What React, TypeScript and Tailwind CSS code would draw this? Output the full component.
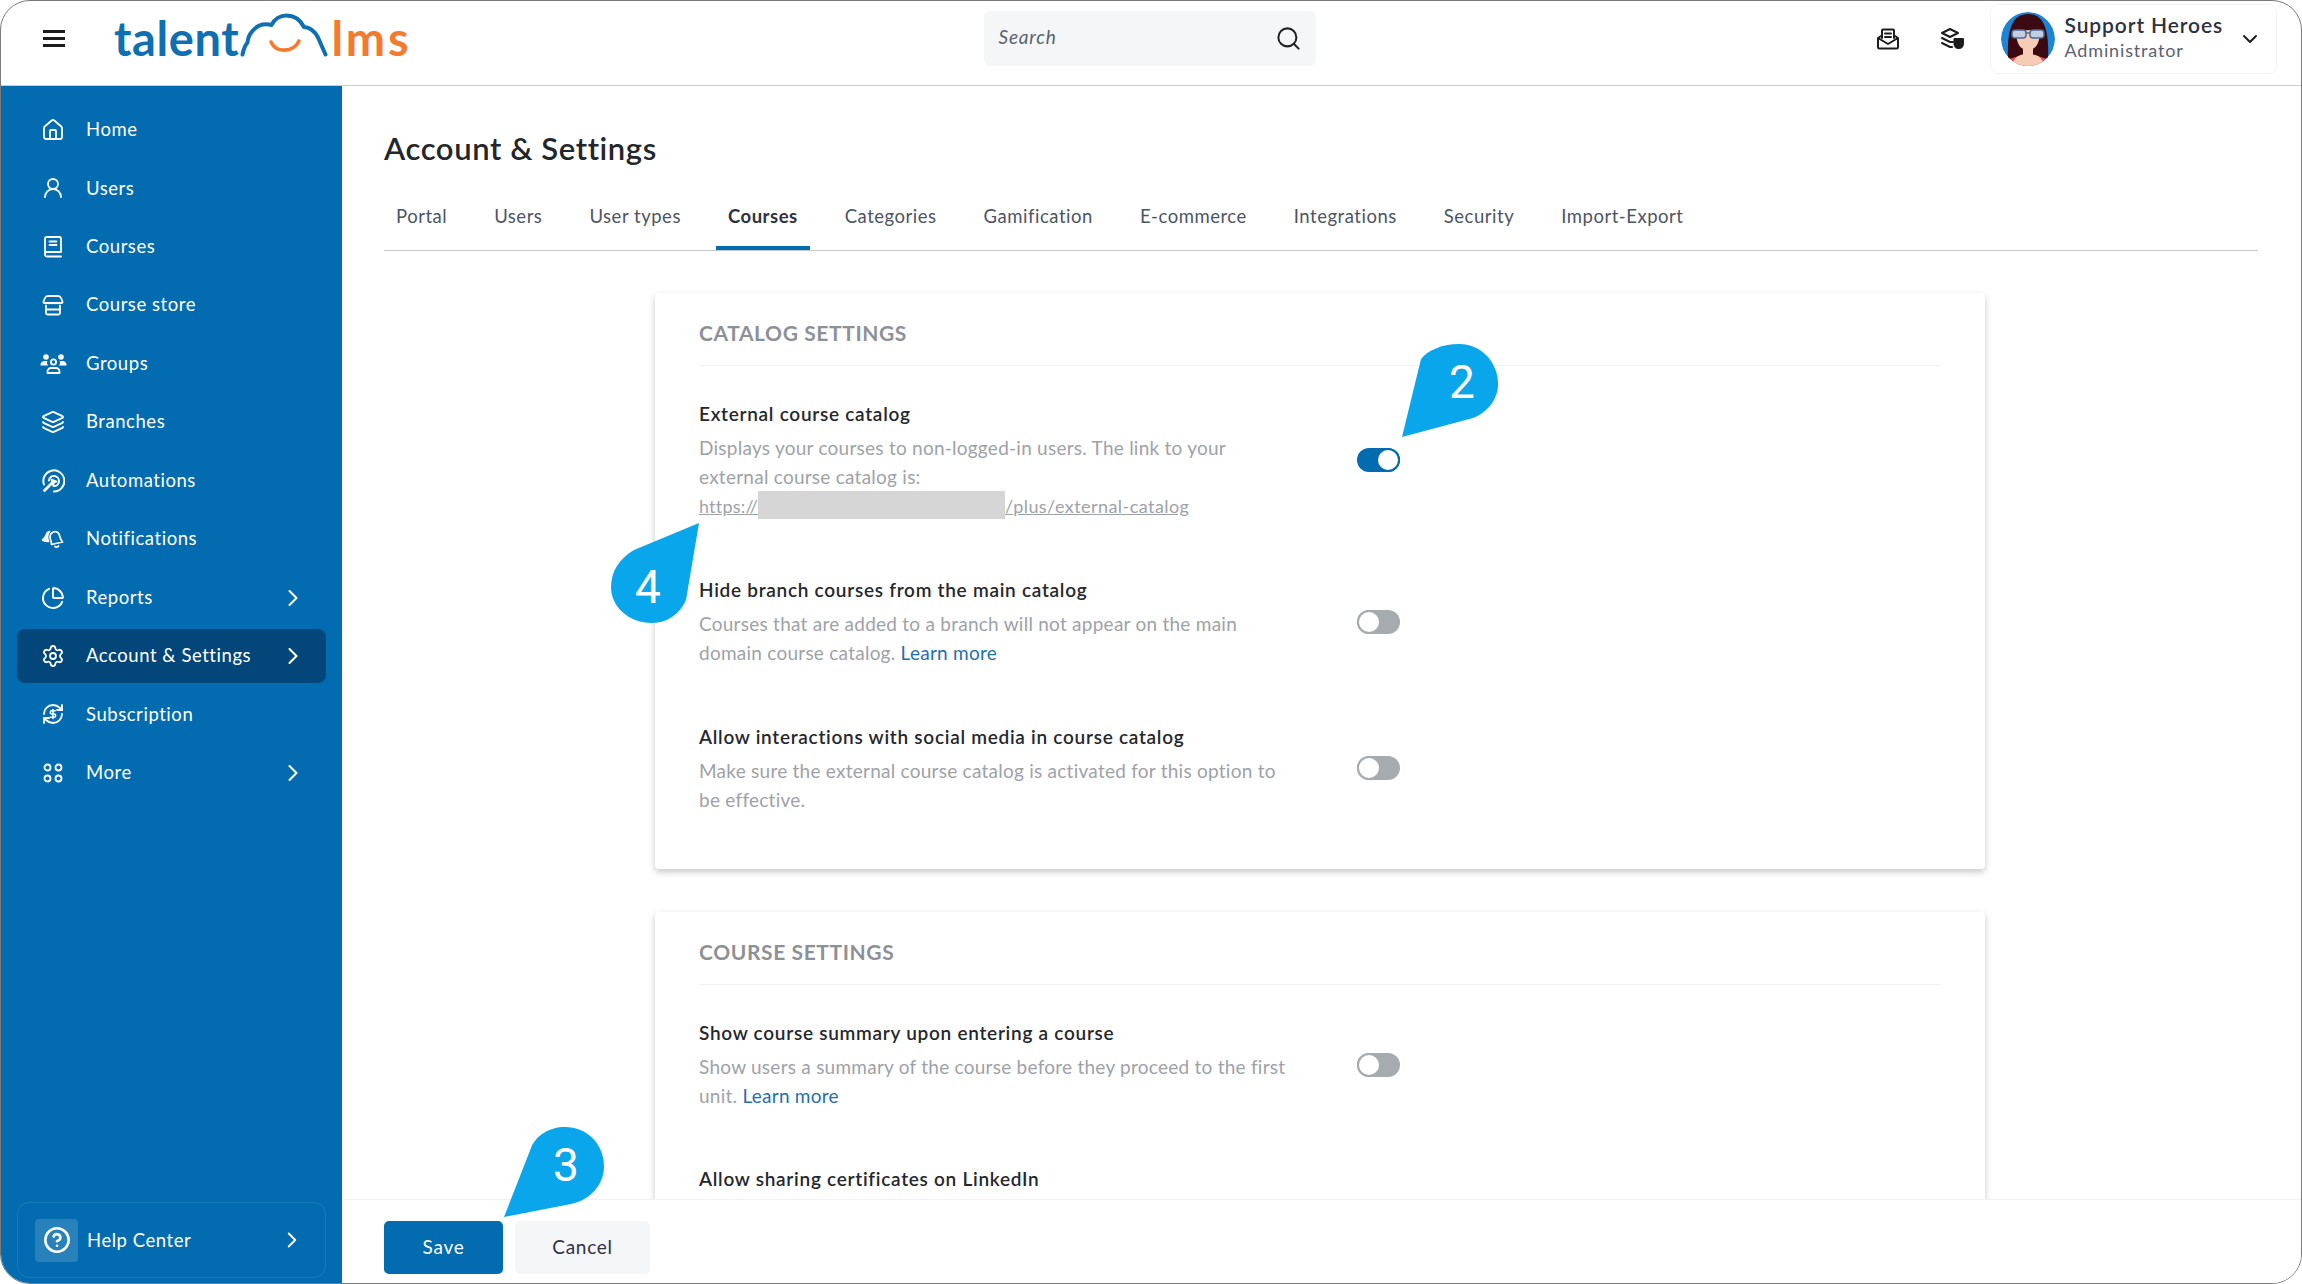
import { ChevronDown, ChevronRight, CircleHelp, House, Layers, Search, Settings, UserRound, ChartPie } from 'lucide-react';
import type { ReactNode } from 'react';

const Icon = ({ children, size = 24 }: { children: ReactNode; size?: number }) => (
  <svg width={size} height={size} viewBox="0 0 24 24" fill="none" stroke="currentColor" strokeWidth={1.8} strokeLinecap="round" strokeLinejoin="round">
    {children}
  </svg>
);

const BookIcon = () => (
  <Icon>
    <path d="M4 18.500V3.500A1.500 1.500 0 0 1 5.500 2h13A1.500 1.500 0 0 1 20 3.500V17H6a2 2 0 0 0-2 2 2 2 0 0 0 2 2.500h14" />
    <path d="M8.500 6.500h7M8.500 10h7" />
  </Icon>
);

const StoreIcon = () => (
  <Icon>
    <path d="M7 3h10c1.500 0 2.500.8 3 2l1.500 3.500c.3 1-.3 1.500-1 1.500h-17c-.7 0-1.300-.5-1-1.500L4 5c.5-1.200 1.500-2 3-2z" />
    <path d="M6.500 9.500q1.500 2 3 0q1.500 2 3 0q1.500 2 3 0q1.500 2 3 0" strokeWidth={1.300} />
    <path d="M5 12.500V20a1.500 1.500 0 0 0 1.500 1.500h11A1.500 1.500 0 0 0 19 20v-7.500" />
    <path d="M5 16.500h14" />
  </Icon>
);

const GroupsIcon = () => (
  <svg width={27} height={24} viewBox="0 0 27 24" fill="none" stroke="currentColor" strokeWidth={1.8} strokeLinecap="round" strokeLinejoin="round">
    <circle cx="13.500" cy="10" r="2.600" />
    <path d="M7.500 21v-1.500a3.500 3.500 0 0 1 3.500-3.500h5a3.500 3.500 0 0 1 3.500 3.500V21z" />
    <circle cx="6" cy="5" r="2.800" fill="currentColor" stroke="none" />
    <circle cx="21" cy="5" r="2.800" fill="currentColor" stroke="none" />
    <path d="M0.500 13.500a4 4 0 0 1 4-4.500h3a3.500 3.500 0 0 0 .8 4.500zM26.500 13.500a4 4 0 0 0-4-4.500h-3a3.500 3.500 0 0 1-.8 4.500z" fill="currentColor" stroke="none" />
  </svg>
);

const AutomationIcon = () => (
  <Icon>
    <path d="M3 15.500A10.500 10.500 0 1 1 13 22.400" strokeWidth={2} />
    <path d="M8 11.500A5 5 0 1 1 12.500 17" strokeWidth={2} />
    <path d="M10.500 10.500l5 2-2.300 1-1 2.300z" fill="currentColor" />
    <path d="M11 14l-7.500 7.500" strokeWidth={2.800} />
  </Icon>
);

const NotificationIcon = () => (
  <svg width={24} height={24} viewBox="0 0 24 24" fill="none" stroke="currentColor" strokeWidth={1.700} strokeLinecap="round" strokeLinejoin="round">
    <path d="M10.500 6.500c2-2.500 6-2.500 7.500.5 1 2.500 1 5 3.500 8l-11 2.500c0-3.500-1.500-5.500-1.500-7 0-2 .5-3.300 1.500-4.500z" />
    <path d="M14 19.500c.8 1 2.500 1 3.500-.5" />
    <path d="M8.500 4.500c-2 .5-3 2-3.500 4-.5 1.500-2 3-3.500 4.500 1.500 1 3.500 1.500 6 1.500-.5-1.500-1-3-1-4.500 0-2 .7-4 2-5.500z" fill="currentColor" />
  </svg>
);

const SubscriptionIcon = () => (
  <Icon>
    <path d="M3 12a9 9 0 0 1 9-9 9.750 9.750 0 0 1 6.740 2.740L21 8" />
    <path d="M21 3v5h-5" />
    <path d="M21 12a9 9 0 0 1-9 9 9.750 9.750 0 0 1-6.740-2.740L3 16" />
    <path d="M8 16H3v5" />
    <g transform="translate(6.600 6.600) scale(0.45)" strokeWidth={3.400}>
      <path d="M12 2v20" />
      <path d="M17 5H9.500a3.500 3.500 0 0 0 0 7h5a3.500 3.500 0 0 1 0 7H6" />
    </g>
  </Icon>
);

const MoreIcon = () => (
  <Icon>
    <circle cx="6.500" cy="6.500" r="3" />
    <circle cx="17.500" cy="6.500" r="3" />
    <circle cx="6.500" cy="17.500" r="3" />
    <circle cx="17.500" cy="17.500" r="3" />
  </Icon>
);

const navItems = [
  { label: 'Home', icon: <House size={24} strokeWidth={1.8} /> },
  { label: 'Users', icon: <UserRound size={24} strokeWidth={1.8} /> },
  { label: 'Courses', icon: <BookIcon /> },
  { label: 'Course store', icon: <StoreIcon /> },
  { label: 'Groups', icon: <GroupsIcon /> },
  { label: 'Branches', icon: <Layers size={24} strokeWidth={1.8} /> },
  { label: 'Automations', icon: <AutomationIcon /> },
  { label: 'Notifications', icon: <NotificationIcon /> },
  { label: 'Reports', icon: <ChartPie size={24} strokeWidth={2} />, arrow: true },
  { label: 'Account & Settings', icon: <Settings size={24} strokeWidth={1.8} />, arrow: true, active: true },
  { label: 'Subscription', icon: <SubscriptionIcon /> },
  { label: 'More', icon: <MoreIcon />, arrow: true },
];

const tabs = ['Portal', 'Users', 'User types', 'Courses', 'Categories', 'Gamification', 'E-commerce', 'Integrations', 'Security', 'Import-Export'];

const Toggle = ({ on, className }: { on?: boolean; className: string }) => (
  <div className={`flex h-[24px] w-[43px] shrink-0 items-center rounded-full ${on ? 'justify-end bg-[#036bb0]' : 'justify-start bg-[#a6abb0]'} ${className}`}>
    <div className={`h-[24px] w-[24px] rounded-full border-2 bg-white ${on ? 'border-[#036bb0]' : 'border-[#a6abb0]'}`} />
  </div>
);

const SectionTitle = ({ children }: { children: ReactNode }) => (
  <div className="border-b border-[#f0f1f2] pt-[26px] pb-[18px] text-[21px] leading-[28px] font-bold tracking-[0.6px] text-[#8d9196]">{children}</div>
);

const Row = ({ title, toggleClass, on, className, children }: { title: string; toggleClass: string; on?: boolean; className: string; children?: ReactNode }) => (
  <div className={`flex ${className}`}>
    <div className="w-[590px]">
      <div className="text-[19px] leading-[28px] font-semibold tracking-[0.72px] text-[#25282c]">{title}</div>
      <div className="mt-[5px] text-[19px] leading-[29px] tracking-[0.25px] text-[#9ea2a7]">{children}</div>
    </div>
    <Toggle on={on} className={`ml-[68px] ${toggleClass}`} />
  </div>
);

const Callout = ({ className, path, viewBox, n, numClass }: { className: string; path: string; viewBox: string; n: string; numClass: string }) => (
  <div className={`absolute ${className}`}>
    <svg className="h-full w-full" viewBox={viewBox}>
      <path d={path} fill="#0aa6ec" />
    </svg>
    <span className={`absolute font-[Roboto,sans-serif] text-[46px] leading-none font-normal text-white ${numClass}`}>{n}</span>
  </div>
);

const Logo = () => (
  <div className="ml-[49px] flex items-center font-[Lato,sans-serif] text-[47px] leading-none font-bold">
    <span className="tracking-[0.6px] text-[#0e6fb2]">talent</span>
    <svg width="92" height="50" viewBox="243 12 92 50" fill="none" strokeLinecap="round" strokeLinejoin="round" className="mt-[-6px]">
      <path d="M246.500 55.500c1-5 2.500-9 5-12 .5-8 7-16 15-18 3-.5 6-.5 9 .5 3-6 9-9.500 15-9.500 8 0 14 5 17.500 11.500 6 .5 11 4.500 14 10.500l7.500 17" stroke="#0e6fb2" strokeWidth="4" />
      <path d="M275 43c5 11 22 11 28-1" stroke="#f47b2e" strokeWidth="3.600" />
    </svg>
    <span className="tracking-[2.8px] text-[#f47b2e]">lms</span>
  </div>
);

const Avatar = () => (
  <svg width="54" height="54" viewBox="0 0 54 54" className="rounded-full">
    <circle cx="27" cy="27" r="27" fill="#1c84d4" />
    <path d="M7 46C6 20 10 2 27 2s21 18 20 44l-7 2H14z" fill="#3b0a10" />
    <path d="M4 54c2-9 12-10 23-10s21 1 23 10z" fill="#f04a50" />
    <path d="M11 54c2-10 8-12 16-12s14 2 16 12z" fill="#f6cdb4" />
    <path d="M22 34h10v10H22z" fill="#f6cdb4" />
    <path d="M15 19c5 0 14-2 24 0 0 12-4 19-12 19s-12-7-12-19z" fill="#f6cdb4" />
    <rect x="11" y="18" width="14" height="8" rx="3" fill="#c3cfe0" stroke="#4d6a96" strokeWidth="1.500" />
    <rect x="29" y="18" width="14" height="8" rx="3" fill="#c3cfe0" stroke="#4d6a96" strokeWidth="1.500" />
    <path d="M25 21h4" stroke="#4d6a96" strokeWidth="1.500" />
  </svg>
);

export default function App() {
  return (
    <div className="relative flex h-[1284px] w-[2302px] flex-col overflow-hidden rounded-[30px] border border-[#7a7a7a] bg-white font-[Lato,sans-serif]">
      <header className="flex h-[85px] shrink-0 items-center border-b border-[#c9cbcd] pb-[9px]">
        <div className="ml-[42px] flex w-[22px] flex-col gap-[4.500px]">
          <div className="h-[2.500px] bg-[#1d1d1d]" />
          <div className="h-[2.500px] bg-[#1d1d1d]" />
          <div className="h-[2.500px] bg-[#1d1d1d]" />
        </div>
        <Logo />
        <div className="ml-[572px] flex h-[55px] w-[332px] items-center justify-between rounded-[6px] bg-[#f5f6f8] pr-[14px] pl-[15px]">
          <span className="mb-[2px] text-[19px] tracking-[0.8px] text-[#5a6272] italic">Search</span>
          <Search size={27} strokeWidth={1.8} className="text-[#222]" />
        </div>
        <svg width="24" height="24" viewBox="0 0 24 24" fill="none" stroke="#1d1d1d" strokeWidth="2" strokeLinejoin="round" strokeLinecap="round" className="ml-[560px]">
          <path d="M6 11V3.500a1 1 0 0 1 1-1h10a1 1 0 0 1 1 1V11" />
          <path d="M9 6.500h6M9 10h6" />
          <path d="M2 11l3-2M22 11l-3-2M2 11v9a1.500 1.500 0 0 0 1.500 1.500h17A1.500 1.500 0 0 0 22 20v-9l-10 6z" />
        </svg>
        <svg width="26" height="24" viewBox="0 0 26 24" fill="none" stroke="#1d1d1d" strokeWidth="2" strokeLinejoin="round" strokeLinecap="round" className="ml-[39px]">
          <path d="M11 2L3 6l8 4 8-4z" />
          <path d="M3 11l8 4h3M3 16l8 4h2" />
          <path d="M15.500 12h8.500v4a4.300 4.300 0 0 1-4.250 5A4.300 4.300 0 0 1 15.500 16z" fill="#1d1d1d" />
        </svg>
        <div className="ml-[25px] flex h-[70px] w-[287px] items-center rounded-[8px] border border-[#f4f4f5] pl-[10px]">
          <Avatar />
          <div className="mb-[3px] ml-[10px] w-[173px]">
            <div className="text-[21px] leading-[26px] font-semibold tracking-[0.9px] text-[#2d3142]">Support Heroes</div>
            <div className="text-[18px] leading-[24px] tracking-[0.85px] text-[#5a6272]">Administrator</div>
          </div>
          <ChevronDown size={24} strokeWidth={2} className="text-[#1d1d1d]" />
        </div>
      </header>

      <div className="flex min-h-0 flex-1">
        <aside className="flex w-[341px] shrink-0 flex-col justify-between bg-[#036bb0] pt-[17px] pb-[5px] text-[18.500px] tracking-[0.55px] text-white">
          <nav className="flex flex-col gap-[4.450px] px-[16px]">
            {navItems.map((item) => (
              <div key={item.label} className={`flex h-[54px] items-center rounded-[8px] ${item.active ? 'bg-[#03477a]' : ''}`}>
                <div className="flex w-[69px] justify-center pl-[3px]">{item.icon}</div>
                <span className="flex-1">{item.label}</span>
                {item.arrow && <ChevronRight size={28} strokeWidth={1.8} className="mr-[19px]" />}
              </div>
            ))}
          </nav>
          <div className="mx-[16px] flex h-[76px] items-center rounded-[12px] border border-white/10 pl-[17px]">
            <div className="flex h-[43px] w-[43px] items-center justify-center rounded-[4px] bg-white/15">
              <CircleHelp size={28} strokeWidth={2.200} />
            </div>
            <span className="ml-[9px] flex-1 pt-[2px]">Help Center</span>
            <ChevronRight size={26} strokeWidth={1.8} className="mr-[20px]" />
          </div>
        </aside>

        <main className="flex min-w-0 flex-1 flex-col">
          <div className="min-h-0 flex-1 overflow-hidden">
            <h1 className="mt-[42px] ml-[42px] text-[31px] leading-[40px] font-semibold tracking-[0.6px] text-[#23262b]">Account &amp; Settings</h1>
            <div className="mt-[28px] ml-[42px] flex h-[55px] w-[1874px] items-start gap-[23px] border-b-[1.500px] border-[#c5c8cb] text-[18.500px]">
              {tabs.map((tab) => (
                <div key={tab} className={`h-[54px] px-[12px] pt-[6px] leading-[28px] tracking-[0.52px] ${tab === 'Courses' ? 'border-b-4 border-[#036bb0] font-bold text-[#2d3142]' : 'text-[#4d5463]'}`}>
                  {tab}
                </div>
              ))}
            </div>

            <section className="mt-[42px] ml-[313px] h-[576px] w-[1330px] rounded-[4px] px-[44px] shadow-[0_3px_7px_rgba(0,0,0,0.22)]">
              <SectionTitle>CATALOG SETTINGS</SectionTitle>
              <Row className="mt-[34px]" title="External course catalog" on toggleClass="mt-[48px]">
                Displays your courses to non-logged-in users. The link to your external course catalog is:
                <br />
                <span className="text-[18px] tracking-[0.2px] underline">https://</span>
                <span className="inline-block h-[28px] w-[247px] bg-[#d6d6d6] align-top" />
                <span className="text-[18px] tracking-[0.45px] underline">/plus/external-catalog</span>
              </Row>
              <Row className="mt-[54.500px]" title="Hide branch courses from the main catalog" toggleClass="mt-[34px]">
                Courses that are added to a branch will not appear on the main domain course catalog. <span className="text-[#1f70ae]">Learn more</span>
              </Row>
              <Row className="mt-[56.500px]" title="Allow interactions with social media in course catalog" toggleClass="mt-[33px]">
                Make sure the external course catalog is activated for this option to be effective.
              </Row>
            </section>

            <section className="mt-[43px] ml-[313px] h-[500px] w-[1330px] rounded-[4px] px-[44px] shadow-[0_3px_7px_rgba(0,0,0,0.22)]">
              <SectionTitle>COURSE SETTINGS</SectionTitle>
              <Row className="mt-[34px]" title="Show course summary upon entering a course" toggleClass="mt-[34px]">
                Show users a summary of the course before they proceed to the first unit. <span className="text-[#1f70ae]">Learn more</span>
              </Row>
              <Row className="mt-[55px]" title="Allow sharing certificates on LinkedIn" toggleClass="mt-[34px]" />
            </section>
          </div>

          <footer className="flex h-[84px] shrink-0 items-start gap-[12px] border-t border-[#f1f2f3] bg-white pt-[21px] pl-[42px] text-[19px]">
            <button className="h-[53px] w-[119px] rounded-[5px] bg-[#036bb0] tracking-[0.7px] text-white">Save</button>
            <button className="h-[53px] w-[135px] rounded-[5px] bg-[#f5f6f8] tracking-[0.7px] text-[#2d3142]">Cancel</button>
          </footer>
        </main>
      </div>

      <Callout
        className="top-[340px] left-[1394px] h-[100px] w-[110px]"
        viewBox="1395 340 110 100"
        path="M1402 436L1421 358C1428 349 1443 343 1459 343C1481 343 1498 361 1498 383C1498 398 1488 411 1473 417Z"
        n="2"
        numClass="top-[18px] left-[54px]"
      />
      <Callout
        className="top-[519px] left-[604px] h-[110px] w-[100px]"
        viewBox="605 520 100 110"
        path="M699 523L634 550C620 558 611 571 611 587C611 607 629 623 652 623C667 623 680 614 686 600Z"
        n="4"
        numClass="top-[44px] left-[30px]"
      />
      <Callout
        className="top-[1120px] left-[499px] h-[100px] w-[110px]"
        viewBox="500 1120 110 100"
        path="M504 1216L531 1147C536 1134 550 1126 565 1126C587 1126 604 1143 604 1165C604 1184 590 1199 571 1203Z"
        n="3"
        numClass="top-[21px] left-[53px]"
      />
    </div>
  );
}
